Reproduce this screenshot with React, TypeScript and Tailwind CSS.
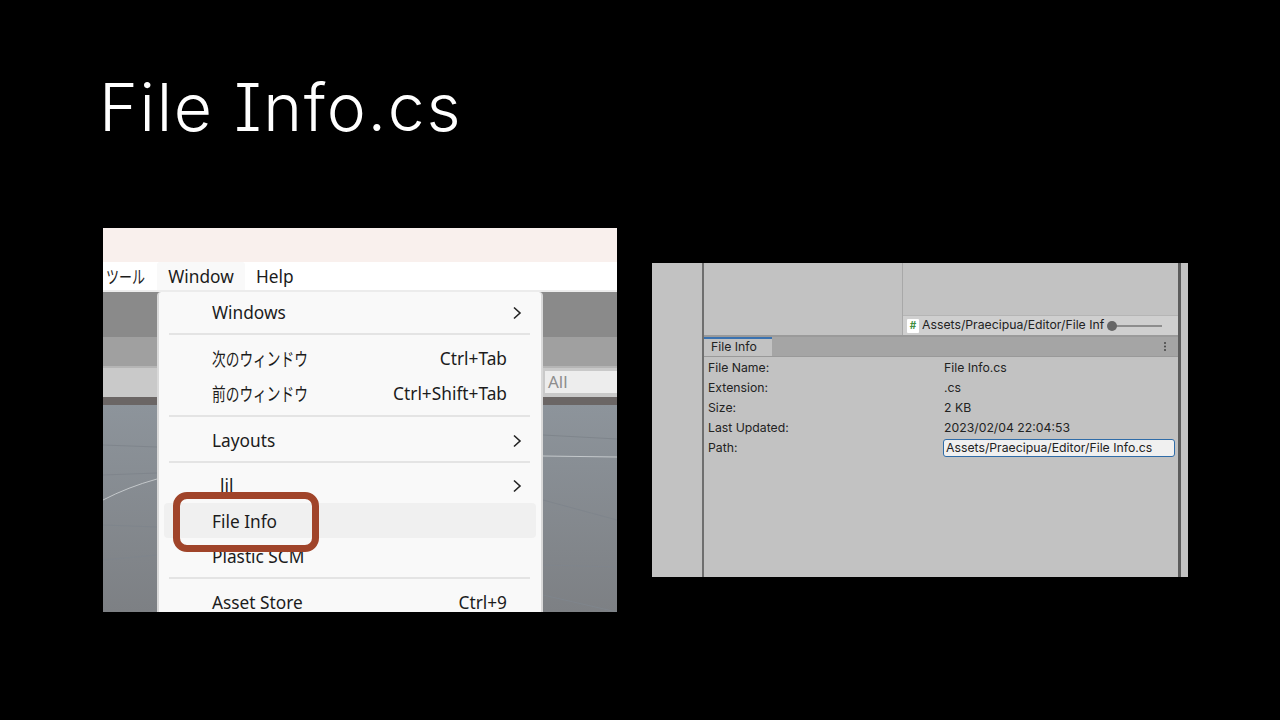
import React from "react";

const menuFont = { fontFamily: '"Noto Sans", "Noto Sans CJK JP", sans-serif' };

function Sep() {
  return <div className="h-[2px] ml-[10px] mr-[11px] bg-[#e4e4e4]" />;
}

function Chevron() {
  return (
    <svg width="10" height="14" viewBox="0 0 10 14" className="block -mr-[15px]">
      <path d="M2 1.5 L8 7 L2 12.5" fill="none" stroke="#222" strokeWidth="1.6" />
    </svg>
  );
}

function Item({ label, right, arrow, h, active, jp, down }: { label: string; right?: string; arrow?: boolean; h: number; active?: boolean; jp?: boolean; down?: boolean }) {
  return (
    <div
      className={"flex items-center justify-between mx-[5px] pl-[48px] pr-[29px] text-[17.3px] text-[#1c1c1c] rounded-[4px] whitespace-nowrap " + (active ? "bg-[#f0f0f0] " : "") + (down ? "pt-[2px]" : "")}
      style={{ height: h }}
    >
      <span className={jp ? "inline-block origin-left scale-x-[0.74] text-[18.5px]" : ""}>{label}</span>
      {right && <span>{right}</span>}
      {arrow && <Chevron />}
    </div>
  );
}

function Row({ label, value }: { label: string; value: string }) {
  return (
    <div className="h-[20px] flex items-center">
      <span className="w-[240px] pl-[4px] shrink-0">{label}</span>
      <span>{value}</span>
    </div>
  );
}

function LeftShot() {
  return (
    <div className="relative w-[514px] h-[384px] overflow-hidden flex flex-col" style={menuFont}>
      <div className="h-[34px] bg-[#f9f0ed]" />
      <div className="h-[30px] bg-white flex items-center text-[17.3px] text-[#1c1c1c] border-b-[2px] border-[#ececec]">
        <span className="w-[54px] pl-[3px] whitespace-nowrap pt-[2px]"><span className="inline-block origin-left scale-x-[0.72] text-[18px]">ツール</span></span>
        <span className="w-[88px] h-full flex items-center justify-center bg-[#f9f9f9] rounded-t-[3px] pt-[2px]">Window</span>
        <span className="ml-[11px] pt-[2px]">Help</span>
      </div>
      <div className="flex-1 flex flex-col">
        <div className="h-[45px] bg-[#8a8a8a]" />
        <div className="h-[29px] bg-[#a0a0a0]" />
        <div className="h-[31px] bg-[#c9c9c9] border-t-[2px] border-[#b5b5b5] flex justify-end">
          <div className="w-[72px] h-[22px] mt-[3px] bg-[#ededed] text-[#8e8e8e] text-[17px] leading-[22px] pl-[3px]">All</div>
        </div>
        <div className="h-[8px] bg-[#6b6665]" />
        <div className="flex-1 bg-gradient-to-b from-[#8d949b] to-[#7d8084]" />
      </div>
      <svg className="absolute left-0 top-[177px]" width="514" height="207" viewBox="0 0 514 207">
        <path d="M0 95 Q25 82 54 74" fill="none" stroke="#c4c8cb" strokeWidth="1" />
        <path d="M440 51 L514 52" fill="none" stroke="#c4c8cb" strokeWidth="1" />
        <path d="M0 40 L54 42 M0 70 L54 68 M0 120 L54 122 M0 155 L54 150 M440 30 L514 34 M440 95 L514 115 M440 160 L514 162 M440 190 L514 207" fill="none" stroke="#7f858c" strokeWidth="1" />
      </svg>
      <div className="absolute left-[54px] top-[64px] w-[386px] h-[330px] bg-[#f9f9f9] border-l-[2px] border-r-[2px] border-[#d9d9d9] rounded-t-[4px]">
        <Item label="Windows" arrow h={41} />
        <Sep />
        <div className="h-[6px]" />
        <Item label="次のウィンドウ" right="Ctrl+Tab" h={35} jp />
        <Item label="前のウィンドウ" right="Ctrl+Shift+Tab" h={35} jp />
        <div className="h-[4px]" />
        <Sep />
        <div className="h-[6px]" />
        <Item label="Layouts" arrow h={35} />
        <div className="h-[3px]" />
        <Sep />
        <div className="h-[5px]" />
        <div className="h-[35px] flex items-center justify-between mx-[5px] pl-[48px] pr-[29px] text-[17.3px] text-[#1c1c1c]">
          <span className="pl-[8px]">lil</span>
          <Chevron />
        </div>
        <Item label="File Info" h={35} active down />
        <Item label="Plastic SCM" h={36} down />
        <div className="h-[3px]" />
        <Sep />
        <div className="h-[5px]" />
        <Item label="Asset Store" right="Ctrl+9" h={35} down />
      </div>
      <div className="absolute left-[70px] top-[264px] w-[146px] h-[60px] border-[7px] border-[#a0442a] rounded-[14px]" />
    </div>
  );
}

function RightShot() {
  return (
    <div
      className="w-[536px] h-[314px] bg-[#c2c2c2] flex text-[12.25px] text-[#222]"
      style={{ fontFamily: 'Inter, "Noto Sans", sans-serif' }}
    >
      <div className="w-[50px] shrink-0" />
      <div className="w-[2px] bg-[#6e6e6e] shrink-0" />
      <div className="w-[474px] flex flex-col shrink-0">
        <div className="h-[72px] flex border-b-[2px] border-[#9a9a9a] box-content">
          <div className="w-[198px] shrink-0" />
          <div className="flex-1 border-l border-[#a8a8a8] flex flex-col justify-end">
            <div className="h-[20px] bg-[#cfcfcf] border-t border-[#b5b5b5] flex items-center pl-[4px] whitespace-nowrap overflow-hidden">
              <span className="w-[12px] h-[14px] bg-white rounded-[1px] text-[#3f8f3f] text-[10px] font-bold flex items-center justify-center mr-[3px] shrink-0">#</span>
              <span className="w-[184px] shrink-0 overflow-hidden">Assets/Praecipua/Editor/File Inf</span>
              <svg width="57" height="12" viewBox="0 0 57 12" className="shrink-0">
                <path d="M4 6 H56" stroke="#777" strokeWidth="1.4" />
                <circle cx="6" cy="6" r="5" fill="#666" />
              </svg>
            </div>
          </div>
        </div>
        <div className="h-[20px] bg-[#a5a5a5] border-b border-[#999] flex justify-between items-stretch">
          <div className="w-[68px] bg-[#c2c2c2] border-t-[2px] border-[#3a72b0] pl-[7px] flex items-center">File Info</div>
          <svg width="12" height="18" viewBox="0 0 12 18" className="mr-[7px]">
            <circle cx="6" cy="6" r="1" fill="#444" />
            <circle cx="6" cy="9.5" r="1" fill="#444" />
            <circle cx="6" cy="13" r="1" fill="#444" />
          </svg>
        </div>
        <div className="pt-[1px]">
          <Row label="File Name:" value="File Info.cs" />
          <Row label="Extension:" value=".cs" />
          <Row label="Size:" value="2 KB" />
          <Row label="Last Updated:" value="2023/02/04 22:04:53" />
          <div className="h-[20px] flex items-center">
            <span className="w-[239px] pl-[4px] shrink-0">Path:</span>
            <div className="w-[232px] h-[18px] bg-[#f0f0f0] border border-[#2f6ca8] rounded-[3px] flex items-center pl-[2px]">Assets/Praecipua/Editor/File Info.cs</div>
          </div>
        </div>
      </div>
      <div className="w-[3px] bg-[#5c5c5c] shrink-0" />
    </div>
  );
}

export default function App() {
  return (
    <div className="w-[1280px] h-[720px] bg-black overflow-hidden">
      <h1
        className="pl-[99px] pt-[64px] h-[228px] text-[66px] leading-[86px] tracking-[1.7px] font-light text-white [font-feature-settings:'cv08']"
        style={{ fontFamily: 'Inter, "Noto Sans", sans-serif' }}
      >
        File Info.cs
      </h1>
      <div className="flex items-start pl-[103px] gap-[35px]">
        <LeftShot />
        <div className="pt-[35px]">
          <RightShot />
        </div>
      </div>
    </div>
  );
}
